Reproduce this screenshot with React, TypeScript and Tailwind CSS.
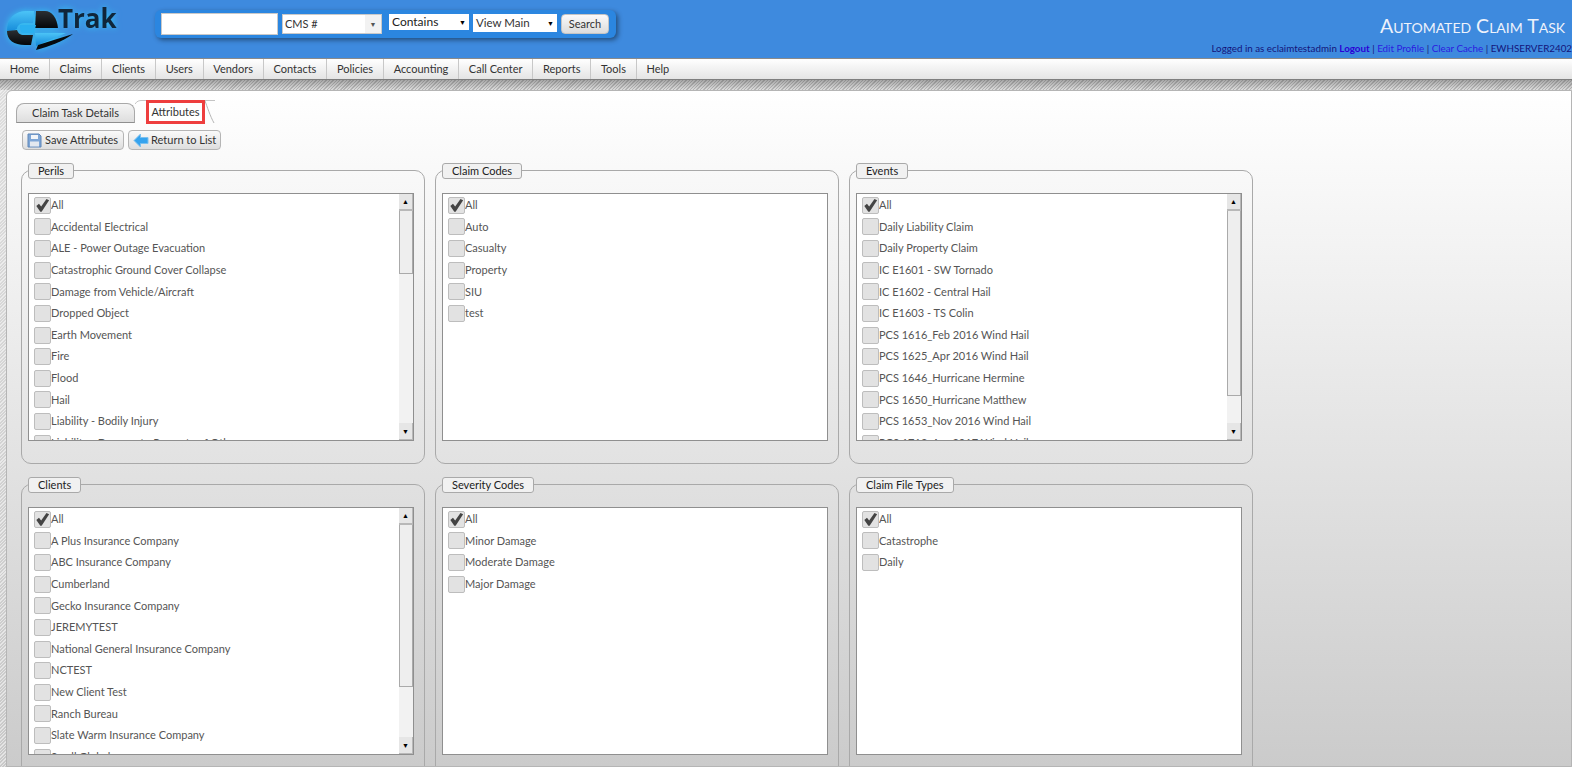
import React from 'react';

const navItems = ['Home', 'Claims', 'Clients', 'Users', 'Vendors', 'Contacts', 'Policies', 'Accounting', 'Call Center', 'Reports', 'Tools', 'Help'];

const perils = ['All', 'Accidental Electrical', 'ALE - Power Outage Evacuation', 'Catastrophic Ground Cover Collapse', 'Damage from Vehicle/Aircraft', 'Dropped Object', 'Earth Movement', 'Fire', 'Flood', 'Hail', 'Liability - Bodily Injury', 'Liability - Damage to Property of Others'];
const claimCodes = ['All', 'Auto', 'Casualty', 'Property', 'SIU', 'test'];
const events = ['All', 'Daily Liability Claim', 'Daily Property Claim', 'IC E1601 - SW Tornado', 'IC E1602 - Central Hail', 'IC E1603 - TS Colin', 'PCS 1616_Feb 2016 Wind Hail', 'PCS 1625_Apr 2016 Wind Hail', 'PCS 1646_Hurricane Hermine', 'PCS 1650_Hurricane Matthew', 'PCS 1653_Nov 2016 Wind Hail', 'PCS 1712_Apr 2017 Wind Hail'];
const clients = ['All', 'A Plus Insurance Company', 'ABC Insurance Company', 'Cumberland', 'Gecko Insurance Company', 'JEREMYTEST', 'National General Insurance Company', 'NCTEST', 'New Client Test', 'Ranch Bureau', 'Slate Warm Insurance Company', 'Small Global'];
const severity = ['All', 'Minor Damage', 'Moderate Damage', 'Major Damage'];
const fileTypes = ['All', 'Catastrophe', 'Daily'];

const Logo = () => (
  <svg width="125" height="56" viewBox="0 0 125 56" className="shrink-0 drop-shadow-[0_0_3px_#35c6f5]">
    <defs>
      <linearGradient id="lg" x1="0" y1="0" x2="0" y2="1">
        <stop offset="0" stopColor="#4cc4f7" />
        <stop offset="1" stopColor="#1287d8" />
      </linearGradient>
      <linearGradient id="dk" x1="0" y1="0" x2="0" y2="1">
        <stop offset="0" stopColor="#2b2f33" />
        <stop offset="1" stopColor="#050709" />
      </linearGradient>
    </defs>
    {/* upper left arc */}
    <path d="M7 31C7 19 14 11 27 11H34L33 23H24C20 23 17 26 17 29L8 33Z" fill="url(#lg)" />
    {/* top dome */}
    <path d="M36 11H45C52 11 57 18 58 28H35Z" fill="url(#dk)" />
    {/* center band */}
    <path d="M20 25H36L34 33H23C21 33 20 30 20 25Z" fill="#2ab0f0" />
    {/* lower left */}
    <path d="M7 31L17 30C18 33 20 35 24 35H33L31 45H25C14 45 7 40 7 31Z" fill="url(#dk)" />
    {/* lower right */}
    <path d="M35 33H66L36 46Z" fill="url(#lg)" />
    {/* swoosh */}
    <path d="M36 50L38 45L73 34C62 42 50 46 36 50Z" fill="#06090c" />
    <text x="58" y="28" fontFamily="'Open Sans', sans-serif" fontSize="26" fontWeight="700" fill="#10263a">Trak</text>
  </svg>
);

const SearchBar = () => (
  <div className="ml-[30px] mt-[10px] h-[28px] w-[461px] rounded-md bg-[#2b86e0] shadow-[2px_2px_5px_rgba(0,0,0,0.45)] flex items-start pl-[6px] pt-[3px] font-['Lato',sans-serif]">
    <div className="h-[22px] w-[117px] bg-white border border-[#c9c9c9]" />
    <div className="ml-[4px] mt-px h-[20px] w-[100px] bg-white border border-[#c9c9c9] flex items-center justify-between pl-[2px] text-[11px] text-[#333]">
      CMS #
      <span className="h-full w-[16px] bg-[#f2f2f2] flex items-center justify-center text-[7px] text-[#555]">▼</span>
    </div>
    <div className="ml-[7px] mt-px h-[16px] w-[80px] bg-white flex items-center justify-between px-[3px] text-[12px] text-[#222]">
      Contains
      <span className="text-[7px] text-black">▼</span>
    </div>
    <div className="ml-[4px] mt-px h-[18px] w-[84px] bg-white flex items-center justify-between px-[3px] text-[11.5px] text-[#333]">
      View Main
      <span className="text-[7px] text-black">▼</span>
    </div>
    <div className="ml-[4px] mt-px h-[20px] w-[48px] rounded-sm bg-gradient-to-b from-[#fafafa] to-[#dcdcdc] border border-[#c4c4c4] text-[11px] text-[#333] flex items-center justify-center">Search</div>
  </div>
);

const CheckItem = ({ label, checked }: { label: string; checked: boolean }) => (
  <div className="h-[21.65px] flex items-center pl-[5px] shrink-0">
    <div className="relative w-[17px] h-[17px] rounded-[2px] border border-[#bdbdbd] bg-[#e2e2e2] shrink-0">
      {checked && (
        <svg viewBox="0 0 17 17" className="absolute inset-0 w-[15px] h-[15px]">
          <path d="M1.5 9L4.5 6.5L7 9.5L13 1L16 2.5L7.5 15.5H6Z" fill="#444" />
        </svg>
      )}
    </div>
    <span className="text-[11px] text-[#555] whitespace-nowrap">{label}</span>
  </div>
);

const Scrollbar = ({ thumb }: { thumb: number }) => (
  <div className="w-[14px] shrink-0 flex flex-col bg-[#f2f2f2]">
    <div className="h-[17px] bg-[#e6e6e6] border-r border-b-2 border-[#b8b8b8] flex items-center justify-center text-[7px] text-black">▲</div>
    <div className="bg-[#eeeeee] border-r border-b border-l border-[#aaaaaa]" style={{ height: thumb }} />
    <div className="flex-1" />
    <div className="h-[17px] bg-[#e6e6e6] border-r border-b border-[#b8b8b8] flex items-center justify-center text-[7px] text-black">▼</div>
  </div>
);

const AttributeBox = ({ title, items, thumb }: { title: string; items: string[]; thumb?: number }) => (
  <div className="relative h-[294px] rounded-[10px] border border-[#a9a9a9] pt-[22px] px-[6px]">
    <div className="absolute left-[6px] -top-[8px] h-[16px] px-[9px] rounded-[3px] border border-[#a9a9a9] bg-[#f1f1f1] text-[11px] leading-[14px] text-[#222]">{title}</div>
    <div className="h-[248px] w-[386px] border border-[#8f8f8f] bg-white flex overflow-hidden">
      <div className="flex-1 overflow-hidden pt-[0.4px]">
        {items.map((it, i) => (
          <CheckItem key={it} label={it} checked={i === 0} />
        ))}
      </div>
      {thumb ? <Scrollbar thumb={thumb} /> : null}
    </div>
  </div>
);

export default function App() {
  return (
    <div className="h-[767px] w-[1572px] overflow-hidden flex flex-col font-['Lato',sans-serif] bg-[repeating-linear-gradient(135deg,rgba(255,255,255,0.5)_0px,rgba(255,255,255,0.5)_1px,transparent_1px,transparent_2.4px),linear-gradient(#e0e0e0,#c9c9c9)]">
      <header className="h-[58px] shrink-0 bg-[#3e8ade] flex items-start relative">
        <Logo />
        <SearchBar />
        <div className="ml-auto flex flex-col items-end">
          <div className="mt-[13px] mr-[7px] text-[19.5px] leading-[26px] text-[#eef2fb] [font-variant:small-caps]">Automated Claim Task</div>
          <div className="mt-[3px] text-[9.8px] leading-[13px] text-[#14147a] whitespace-nowrap">
            Logged in as eclaimtestadmin <b className="text-[#2b00d6]">Logout</b> | <span className="text-[#2b1be0]">Edit Profile</span> | <span className="text-[#2b1be0]">Clear Cache</span> | EWHSERVER2402
          </div>
        </div>
      </header>
      <nav className="h-[22px] shrink-0 flex bg-gradient-to-b from-white to-[#e4e4e4] border-t border-[#8a8a8a] border-b border-b-[#7e7e7e]">
        {navItems.map((n) => (
          <div key={n} className="h-full px-[9.75px] flex items-center border-r border-[#c8c8c8] last:border-r-0 text-[11px] text-[#333]">{n}</div>
        ))}
      </nav>
      <div className="h-[10px] shrink-0 bg-[linear-gradient(rgba(110,110,110,0.45),rgba(255,255,255,0.2)),repeating-linear-gradient(135deg,#a6a6a6_0px,#a6a6a6_1px,#d4d4d4_1px,#d4d4d4_2.4px)]" />
      <main className="flex-1 min-h-0 overflow-hidden ml-[6px] pl-[9px] pt-[11px] rounded-tl-md border border-[#b5b5b5] bg-gradient-to-b from-white to-[#cbcbcb]">
        <div className="flex h-[21px] items-end">
          <div className="h-[20px] w-[119px] rounded-t-lg border border-[#a9a9a9] border-b-[#8f8f8f] bg-gradient-to-b from-[#f5f5f5] to-[#dedede] text-[11px] leading-[18px] text-center text-[#333]">Claim Task Details</div>
          <div className="relative h-[21px] w-[80px] text-center">
            <svg width="80" height="23" viewBox="0 0 80 23" className="absolute left-0 -top-[2px]">
              <path d="M0 4C2 1 4 0.5 7 0.5H80" stroke="#c4c4c4" fill="none" />
              <path d="M70 1C72 6 75 16 79 23" stroke="#b5b5b5" fill="none" />
            </svg>
            <span className="absolute left-[11px] -top-[2px] h-[24px] w-[59px] border-[3px] border-[#ee3e3e] bg-white text-[11px] leading-[17px] text-[#333]">Attributes</span>
          </div>
        </div>
        <div className="mt-[7px] flex gap-[4px] ml-[6px]">
          <div className="h-[20px] w-[102px] shrink-0 rounded-sm border border-[#b5b5b5] bg-gradient-to-b from-[#fafafa] to-[#dedede] flex items-center pl-[4px] gap-[3px] text-[11px] whitespace-nowrap text-[#333]">
            <svg width="15" height="15" viewBox="0 0 15 15">
              <path d="M1 1H12L14 3V14H1Z" fill="#7ea6d6" stroke="#5f86b8" />
              <rect x="4" y="2" width="7" height="4" fill="#f2f5f9" />
              <rect x="3" y="8.5" width="9" height="5" fill="#e3e8ef" />
            </svg>
            Save Attributes
          </div>
          <div className="h-[20px] w-[93px] shrink-0 rounded-sm border border-[#b5b5b5] bg-gradient-to-b from-[#fafafa] to-[#dedede] flex items-center pl-[4px] gap-[2px] text-[11px] whitespace-nowrap text-[#333]">
            <svg width="16" height="15" viewBox="0 0 16 15">
              <path d="M1 7.5L7.5 1V4.5H15V10.5H7.5V14Z" fill="#35a3ee" stroke="#7cc0ee" />
            </svg>
            Return to List
          </div>
        </div>
        <div className="mt-[20px] ml-[5px] grid grid-cols-[404px_404px_404px] gap-x-[10px] gap-y-[20px]">
          <AttributeBox title="Perils" items={perils} thumb={63} />
          <AttributeBox title="Claim Codes" items={claimCodes} />
          <AttributeBox title="Events" items={events} thumb={185} />
          <AttributeBox title="Clients" items={clients} thumb={162} />
          <AttributeBox title="Severity Codes" items={severity} />
          <AttributeBox title="Claim File Types" items={fileTypes} />
        </div>
      </main>
    </div>
  );
}
